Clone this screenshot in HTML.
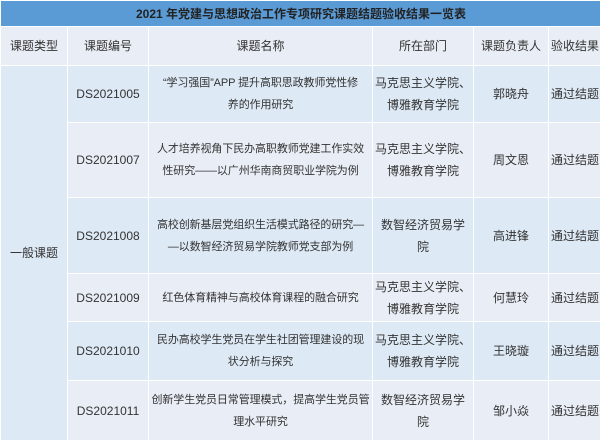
<!DOCTYPE html>
<html><head><meta charset="utf-8"><style>
body{margin:0;width:600px;height:437px;overflow:hidden;background:#e9eef6;font-family:"Liberation Sans","Noto Sans CJK SC",sans-serif;color:#333;}
table{border-collapse:collapse;table-layout:fixed;width:601px;font-size:12px;}
td{border:1px solid #fff;text-align:center;vertical-align:middle;padding:0 1px;line-height:22px;overflow:hidden;white-space:nowrap;}
td.n{font-size:11px;letter-spacing:-0.1px;}
.t{background:#5b9bd5;color:#222;font-weight:bold;font-size:12px;height:25px;}
.h td{background:#e9eef6;height:38px;}
.a td{background:#dde9f5;}
.b td{background:#e9eef6;}
td.f{background:#dde9f5;}
</style></head><body>
<table>
<colgroup><col style="width:67px"><col style="width:81px"><col style="width:224px"><col style="width:101px"><col style="width:75px"><col style="width:53px"></colgroup>
<tr><td class="t" colspan="6">2021 年党建与思想政治工作专项研究课题结题验收结果一览表</td></tr>
<tr class="h"><td>课题类型</td><td>课题编号</td><td>课题名称</td><td>所在部门</td><td>课题负责人</td><td>验收结果</td></tr>
<tr class="a" style="height:57px"><td class="f" rowspan="6">一般课题</td><td>DS2021005</td><td class="n">“学习强国”APP 提升高职思政教师党性修<br>养的作用研究</td><td>马克思主义学院、<br>博雅教育学院</td><td>郭晓舟</td><td>通过结题</td></tr>
<tr class="b" style="height:75px"><td>DS2021007</td><td class="n">人才培养视角下民办高职教师党建工作实效<br>性研究——以广州华南商贸职业学院为例</td><td>马克思主义学院、<br>博雅教育学院</td><td>周文恩</td><td>通过结题</td></tr>
<tr class="a" style="height:76px"><td>DS2021008</td><td class="n">高校创新基层党组织生活模式路径的研究—<br>—以数智经济贸易学院教师党支部为例</td><td>数智经济贸易学<br>院</td><td>高进锋</td><td>通过结题</td></tr>
<tr class="b" style="height:48px"><td>DS2021009</td><td class="n">红色体育精神与高校体育课程的融合研究</td><td>马克思主义学院、<br>博雅教育学院</td><td>何慧玲</td><td>通过结题</td></tr>
<tr class="a" style="height:59px"><td>DS2021010</td><td class="n">民办高校学生党员在学生社团管理建设的现<br>状分析与探究</td><td>马克思主义学院、<br>博雅教育学院</td><td>王晓璇</td><td>通过结题</td></tr>
<tr class="b" style="height:60px"><td>DS2021011</td><td class="n">创新学生党员日常管理模式，提高学生党员管<br>理水平研究</td><td>数智经济贸易学<br>院</td><td>邹小焱</td><td>通过结题</td></tr>
</table>
</body></html>
